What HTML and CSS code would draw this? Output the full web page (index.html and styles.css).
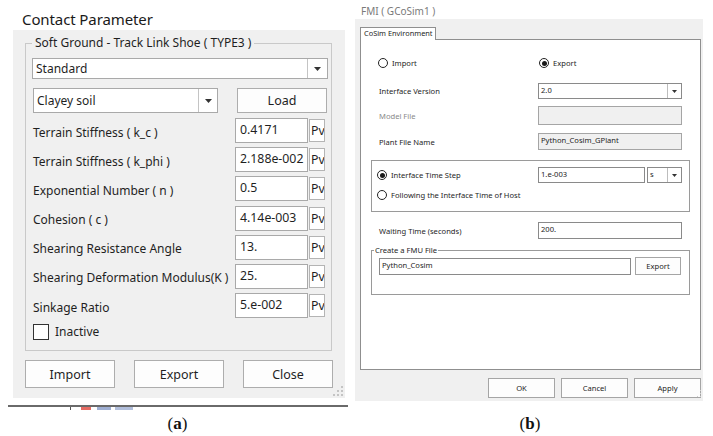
FILE: index.html
```html
<!DOCTYPE html>
<html>
<head>
<meta charset="utf-8">
<link rel="stylesheet" href="styles.css">
</head>
<body>
<div class="page">
  <figure class="fig fig-a">
    <div class="dlg-title">Contact Parameter</div>
    <div class="panel-a">
      <fieldset class="grp">
        <legend>Soft Ground - Track Link Shoe ( TYPE3 )</legend>
        <div class="combo combo-std">
          <span class="val">Standard</span>
          <span class="drop"><svg width="7" height="4" viewBox="0 0 7 4"><polygon points="0,0 7,0 3.5,4" fill="#333"/></svg></span>
        </div>
        <div class="row2">
          <div class="combo combo-soil">
            <span class="val">Clayey soil</span>
            <span class="drop"><svg width="7" height="4" viewBox="0 0 7 4"><polygon points="0,0 7,0 3.5,4" fill="#333"/></svg></span>
          </div>
          <button class="btn btn-load">Load</button>
        </div>
        <div class="params">
          <div class="prow"><span class="lbl">Terrain Stiffness ( k_c )</span><span class="tb">0.4171</span><span class="pv">Pv</span></div>
          <div class="prow"><span class="lbl">Terrain Stiffness ( k_phi )</span><span class="tb">2.188e-002</span><span class="pv">Pv</span></div>
          <div class="prow"><span class="lbl">Exponential Number ( n )</span><span class="tb">0.5</span><span class="pv">Pv</span></div>
          <div class="prow"><span class="lbl">Cohesion ( c )</span><span class="tb">4.14e-003</span><span class="pv">Pv</span></div>
          <div class="prow"><span class="lbl">Shearing Resistance Angle</span><span class="tb">13.</span><span class="pv">Pv</span></div>
          <div class="prow"><span class="lbl">Shearing Deformation Modulus(K )</span><span class="tb">25.</span><span class="pv">Pv</span></div>
          <div class="prow"><span class="lbl">Sinkage Ratio</span><span class="tb">5.e-002</span><span class="pv">Pv</span></div>
        </div>
        <div class="chk"><span class="box"></span><span>Inactive</span></div>
      </fieldset>
      <div class="btnrow">
        <button class="btn btn-a">Import</button>
        <button class="btn btn-a">Export</button>
        <button class="btn btn-a">Close</button>
      </div>
      <svg class="grip" width="12" height="12" viewBox="0 0 12 12">
        <g fill="#c4c4c4"><rect x="9" y="1" width="2" height="2"/><rect x="5" y="5" width="2" height="2"/><rect x="9" y="5" width="2" height="2"/><rect x="1" y="9" width="2" height="2"/><rect x="5" y="9" width="2" height="2"/><rect x="9" y="9" width="2" height="2"/></g>
      </svg>
    </div>
    <div class="rule"></div>
    <div class="frag"><span class="f1"></span><span class="f2"></span><span class="f3"></span><span class="f4"></span></div>
    <figcaption class="cap cap-a">(<b>a</b>)</figcaption>
  </figure>

  <figure class="fig fig-b">
    <div class="fmi-title">FMI ( GCoSim1 )</div>
    <div class="panel-b">
      <div class="tabs"><div class="tab">CoSim Environment</div></div>
      <div class="tabpage">
        <div class="frow radios">
          <div class="ritem ritem-first"><span class="radio"></span><span>Import</span></div>
          <div class="ritem"><span class="radio on"></span><span>Export</span></div>
        </div>
        <div class="frow r-version">
          <span class="flbl">Interface Version</span>
          <div class="scombo w144"><span class="sval">2.0</span><span class="sdrop"><svg width="5" height="3" viewBox="0 0 5 3"><polygon points="0,0 5,0 2.5,3" fill="#333"/></svg></span></div>
        </div>
        <div class="frow r-model">
          <span class="flbl dis">Model File</span>
          <span class="stb gray h19"></span>
        </div>
        <div class="frow r-plant">
          <span class="flbl">Plant File Name</span>
          <span class="stb gray h17">Python_Cosim_GPlant</span>
        </div>
        <div class="grpb">
          <div class="grow g1">
            <div class="ritem ritem-g"><span class="radio on"></span><span>Interface Time Step</span></div>
            <span class="stb step">1.e-003</span>
            <div class="scombo unit"><span class="sval">s</span><span class="sdrop"><svg width="5" height="3" viewBox="0 0 5 3"><polygon points="0,0 5,0 2.5,3" fill="#333"/></svg></span></div>
          </div>
          <div class="grow g2">
            <div class="ritem"><span class="radio"></span><span>Following the Interface Time of Host</span></div>
          </div>
        </div>
        <div class="frow r-wait">
          <span class="flbl">Waiting Time (seconds)</span>
          <span class="stb h17 w144">200.</span>
        </div>
        <fieldset class="fmu">
          <legend>Create a FMU File</legend>
          <div class="fmurow">
            <span class="stb fmutb">Python_Cosim</span>
            <button class="sbtn fmubtn">Export</button>
          </div>
        </fieldset>
      </div>
      <div class="dlgbtns">
        <button class="sbtn dbtn">OK</button>
        <button class="sbtn dbtn">Cancel</button>
        <button class="sbtn dbtn">Apply</button>
      </div>
      <svg class="grip grip-b" width="6" height="10" viewBox="0 0 6 10">
        <g fill="#d0d0d0"><rect x="3" y="1" width="1" height="1"/><rect x="3" y="4" width="1" height="1"/><rect x="3" y="7" width="1" height="1"/><rect x="0" y="7" width="1" height="1"/></g>
      </svg>
    </div>
    <figcaption class="cap cap-b">(<b>b</b>)</figcaption>
  </figure>
</div>
</body>
</html>
```

FILE: styles.css
```css
* { box-sizing: border-box; }
html, body { margin: 0; padding: 0; background: #fff; }
body { font-family: "Noto Sans", "Open Sans", sans-serif; color: #1f1f1f; }
.page { display: flex; width: 713px; height: 436px; overflow: hidden; }
.fig { margin: 0; }
.fig-a { width: 355px; flex: none; }
.fig-b { width: 358px; flex: none; }

/* ---------- Figure (a) ---------- */
.dlg-title { height: 30px; padding-top: 9px; margin-left: 22px; font-size: 15px; letter-spacing: -0.1px; line-height: 20px; color: #1a1a1a; }
.panel-a { position: relative; margin-left: 13px; width: 332px; height: 368px; background: #f0f0f0; padding: 5px 12px 0; }
.grp { margin: 0; width: 307px; height: 316px; border: 1px solid #c9c9c9; padding: 7px 0 0 6px; font-size: 12px; }
.grp legend { padding: 0 3px; margin: 0; font-size: 12px; line-height: 16px; color: #1f1f1f; }
.combo { display: flex; background: #fff; border: 1px solid #a9a9a9; font-size: 12px; }
.combo .val { flex: 1; padding-left: 3px; white-space: nowrap; }
.combo .drop { width: 20px; border-left: 1px solid #c4c4c4; display: flex; align-items: center; justify-content: center; }
.combo-std { width: 296px; height: 21px; line-height: 19px; }
.row2 { display: flex; margin-top: 9px; }
.combo-soil { width: 185px; height: 25px; line-height: 23px; margin-left: 1px; }
.combo-soil .drop { width: 19px; }
.btn { font-family: inherit; color: #1f1f1f; background: #fdfdfd; border: 1px solid #adadad; padding: 0; }
.btn-load { width: 90px; height: 25px; margin-left: 19px; font-size: 12.5px; }
.params { display: flex; flex-direction: column; gap: 4.2px; margin-top: 5px; }
.prow { display: flex; align-items: center; height: 25px; }
.prow .lbl { width: 203px; padding-left: 1px; padding-top: 3px; white-space: nowrap; }
.tb { width: 73px; height: 25px; background: #fff; border: 1px solid #a9a9a9; padding: 3px 0 0 4px; line-height: 16px; white-space: nowrap; font-size: 12.3px; }
.pv { width: 16px; height: 23px; margin-left: 1px; background: #fff; border: 1px solid #b4b4b4; overflow: hidden; white-space: nowrap; padding-left: 1px; line-height: 21px; font-size: 12.3px; }
.chk { display: flex; align-items: center; margin-top: 5px; margin-left: 1px; }
.chk .box { width: 16px; height: 16px; border: 1px solid #333; background: #fff; margin-right: 6px; }
.btnrow { display: flex; justify-content: space-between; margin-top: 9px; width: 308px; }
.btn-a { width: 90px; height: 28px; font-size: 12.5px; }
.grip { position: absolute; right: 1px; bottom: 1px; }
.rule { margin: 7px 0 0 8px; width: 340px; height: 2px; background: #6a6a6a; }
.frag { display: flex; align-items: flex-start; margin-left: 70px; height: 4px; }
.frag span { display: block; height: 3px; }
.f1 { width: 1px; background: #555; }
.f2 { width: 10px; margin-left: 10px; background: #e0463c; opacity: .8; }
.f3 { width: 14px; margin-left: 6px; background: #3f5fa8; opacity: .5; }
.f4 { width: 18px; margin-left: 4px; background: #3f5fa8; opacity: .4; }
.cap { font-family: "Liberation Serif", "DejaVu Serif", serif; font-size: 17px; line-height: 20px; text-align: center; color: #111; }
.cap b { font-weight: 700; }
.cap-a { margin-top: 3px; }

/* ---------- Figure (b) ---------- */
.fmi-title { height: 19px; padding-top: 5px; margin-left: 6px; font-size: 10px; line-height: 12px; color: #7a7a7a; }
.panel-b { position: relative; width: 348px; height: 382px; background: #f0f0f0; padding: 8px 2px 0 5px; font-size: 7.6px; color: #1e1e1e; }
.tabs { display: flex; height: 12px; }
.tab { position: relative; z-index: 1; width: 76px; height: 13px; background: #fff; border: 1px solid #8f8f8f; border-bottom: none; font-size: 7.4px; line-height: 11px; padding-left: 3px; color: #1e1e1e; white-space: nowrap; }
.tabpage { width: 341px; height: 331px; background: #fff; border: 1px solid #8f8f8f; }
.frow { display: flex; align-items: center; padding-left: 17px; }
.flbl { width: 160px; padding-left: 1px; white-space: nowrap; }
.flbl.dis { color: #8a8a8a; }
.radios { margin-top: 16px; height: 14px; }
.ritem { display: flex; align-items: center; white-space: nowrap; }
.ritem-first { width: 161px; }
.radio { width: 10px; height: 10px; border: 1px solid #222; border-radius: 50%; margin-right: 4px; display: flex; align-items: center; justify-content: center; background: #fff; }
.radio.on::after { content: ""; width: 5px; height: 5px; border-radius: 50%; background: #1a1a1a; }
.r-version { margin-top: 13px; }
.scombo { display: flex; height: 16px; background: #fff; border: 1px solid #8a8a8a; }
.sval { flex: 1; padding-left: 2px; line-height: 12px; }
.sdrop { width: 14px; border-left: 1px solid #bdbdbd; display: flex; align-items: center; justify-content: center; }
.w144 { width: 144px; }
.stb { display: block; background: #fff; border: 1px solid #8a8a8a; padding-left: 2px; line-height: 12px; white-space: nowrap; }
.stb.gray { background: #f0f0f0; border-color: #a5a5a5; width: 144px; }
.h19 { height: 19px; }
.h17 { height: 17px; }
.r-model { margin-top: 7px; }
.r-plant { margin-top: 8px; }
.grpb { margin: 10px 0 0 10px; width: 319px; height: 52px; border: 1px solid #9a9a9a; padding-left: 5px; }
.grow { display: flex; align-items: center; }
.g1 { margin-top: 6px; }
.ritem-g { width: 161px; }
.stb.step { width: 107px; height: 16px; }
.scombo.unit { width: 35px; margin-left: 2px; }
.g2 { margin-top: 7px; }
.r-wait { margin-top: 10px; }
.fmu { margin: 6px 0 0 10px; width: 319px; height: 50px; border: 1px solid #9a9a9a; padding: 2px 0 0 7px; }
.fmu legend { padding: 0 1px; margin-left: -5px; font-size: 7.6px; line-height: 10px; color: #1e1e1e; }
.fmurow { display: flex; align-items: center; }
.fmutb { width: 252px; height: 17px; }
.sbtn { font-family: inherit; font-size: 7.6px; color: #1e1e1e; background: #fdfdfd; border: 1px solid #a5a5a5; padding: 0; }
.fmubtn { width: 46px; height: 18px; margin-left: 4px; }
.dlgbtns { display: flex; justify-content: flex-end; gap: 6px; margin-top: 8px; }
.dbtn { width: 67px; height: 20px; }
.grip-b { right: 0; bottom: 2px; }
.cap-b { margin-top: 13px; padding-right: 8px; }
```
